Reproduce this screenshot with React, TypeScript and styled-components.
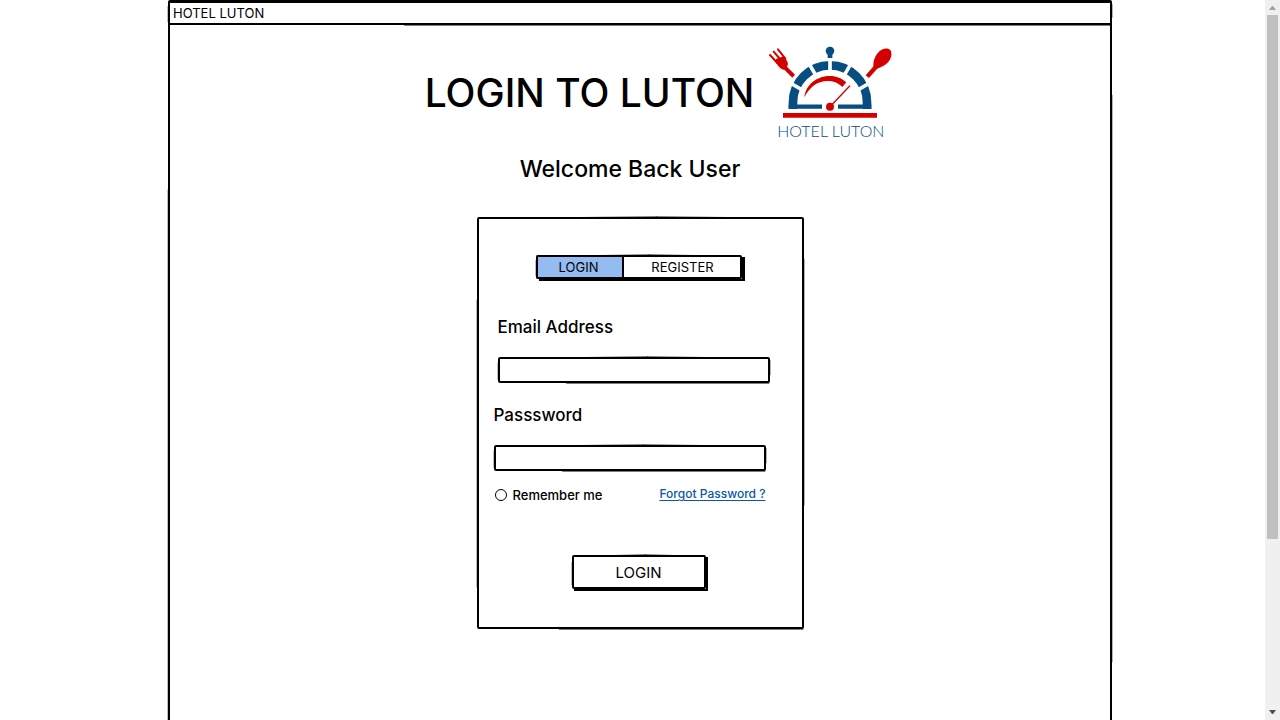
import React, { useState } from "react";
import styled, { createGlobalStyle } from "styled-components";

const GlobalStyle = createGlobalStyle`
  *, *::before, *::after { box-sizing: border-box; }
  body { margin: 0; background: #fff; color: #000; font-family: Inter, "Noto Sans", sans-serif; }
`;

const Viewport = styled.div`
  height: 100vh;
  overflow-y: auto;
  scrollbar-width: none;
`;

const Sheet = styled.main`
  position: relative;
  width: 100%;
  max-width: 944px;
  min-height: 946px;
  margin: 0 auto;
  padding-top: 1px;
`;

const TopBar = styled.div`
  position: relative;
  height: 24px;
  padding: 0 5px;
  font-size: 13px;
  line-height: 24px;
`;

const Outline = styled.svg`
  position: absolute;
  inset: 1px;
  width: calc(100% - 2px);
  height: calc(100% - 2px);
  overflow: visible;
  pointer-events: none;
  fill: none;
  stroke: #000;
  stroke-linejoin: round;
`;

/* Hand-drawn border: an even pen line, thickened a little along part of each side. */
function SketchOutline() {
  return (
    <Outline aria-hidden="true">
      <rect width="100%" height="100%" rx="1" strokeWidth="2" />
      <g strokeWidth="1" strokeLinecap="round">
        <line x1="8%" y1="0" x2="55%" y2="-1" />
        <line x1="55%" y1="-1" x2="98%" y2="0" />
        <line x1="25%" y1="100%" x2="100%" y2="100%" transform="translate(0 1)" />
        <line x1="0" y1="20%" x2="0" y2="90%" transform="translate(-1 0)" strokeOpacity="0.5" />
        <line x1="100%" y1="10%" x2="100%" y2="70%" transform="translate(1 0)" strokeOpacity="0.6" />
      </g>
    </Outline>
  );
}

const Header = styled.header`
  display: flex;
  justify-content: center;
  align-items: flex-start;
  gap: 14px;
  padding: 20px 0 0 38px;
`;

const Title = styled.h1`
  margin: 24px 0 0;
  font-size: 39px;
  font-weight: 500;
  line-height: 48px;
`;

const Brand = styled.div`
  width: 125px;
  color: #064d82;
  font-family: Lato, sans-serif;
  font-size: 16px;
  font-weight: 300;
  line-height: 20px;
  text-align: center;
`;

const Emblem = styled.svg`
  display: block;
  width: 125px;
  height: 76px;
`;

const Welcome = styled.h2`
  margin: 12px 0 0;
  padding-right: 20px;
  font-size: 23px;
  font-weight: 500;
  line-height: 32px;
  text-align: center;
`;

const Card = styled.form`
  position: relative;
  width: 100%;
  max-width: 327px;
  margin: 32px auto 0;
  padding: 38px 20px 40px 17px;
`;

const Tabs = styled.div`
  position: relative;
  display: flex;
  width: 206px;
  height: 24px;
  margin: 0 auto;
  background: #fff;
  box-shadow: 3px 2px 0 #000;
`;

const Tab = styled.button<{ $active: boolean }>`
  flex: ${(p) => (p.$active ? "0 0 88px" : "1")};
  padding: 0;
  border: 0;
  border-right: ${(p) => (p.$active ? "2px solid #000" : "0")};
  background: ${(p) => (p.$active ? "#94bbf2" : "#fff")};
  color: #000;
  font: inherit;
  font-size: 13px;
  line-height: 22px;
`;

const Field = styled.div<{ $inset?: boolean }>`
  padding-left: ${(p) => (p.$inset ? "4px" : "0")};
`;

const Label = styled.label`
  display: block;
  font-size: 17px;
  font-weight: 500;
  line-height: 24px;
`;

const Fields = styled.div`
  display: grid;
  gap: 20px;
  padding-top: 36px;
`;

const InputBox = styled.div`
  position: relative;
  width: 272px;
  max-width: 100%;
  height: 26px;
  margin-top: 18px;
`;

const Input = styled.input`
  width: 100%;
  height: 100%;
  padding: 0 8px;
  border: 0;
  outline: 0;
  background: transparent;
  font: inherit;
  font-size: 13px;
`;

const Options = styled.div`
  display: flex;
  justify-content: space-between;
  align-items: center;
  width: 272px;
  max-width: 100%;
  padding: 14px 0 0 1px;
  font-size: 13px;
  line-height: 20px;
`;

const Remember = styled.label`
  display: flex;
  align-items: center;
  gap: 6px;
  font-weight: 500;
`;

const Radio = styled.input`
  appearance: none;
  width: 12px;
  height: 12px;
  margin: 0;
  border: 1px solid #000;
  border-radius: 50%;
  &:checked { background: radial-gradient(#000 40%, #fff 45%); }
`;

const Forgot = styled.a`
  color: #0b57a4;
  font-size: 12px;
  font-weight: 500;
  line-height: 16px;
  padding-bottom: 2px;
  text-underline-offset: 2px;
`;

const Submit = styled.button`
  position: relative;
  display: block;
  width: 134px;
  height: 34px;
  margin: 50px auto 0;
  padding: 0;
  border: 0;
  background: #fff;
  box-shadow: 2px 2px 0 #000;
  color: #000;
  font: inherit;
  font-size: 15px;
`;

const ScrollTrack = styled.div`
  position: fixed;
  top: 0;
  right: 0;
  bottom: 0;
  display: flex;
  flex-direction: column;
  width: 15px;
  background: #f0f0f0;
`;

const ScrollArrow = styled.svg`
  display: block;
  flex: 0 0 15px;
  width: 15px;
`;

const ScrollLane = styled.div`
  flex: 1;
  padding: 0 2px;
`;

const ScrollThumb = styled.div`
  height: 76%;
  background: #c0c0c0;
`;

function Logo() {
  return (
    <Brand>
      <Emblem viewBox="54 30 375 228" aria-hidden="true">
        <g fill="none" stroke="#064d82">
          <path d="M129 222 V202 A111 111 0 0 1 351 202 V222" strokeWidth="26" />
          <path d="M116 215 H216 M264 215 H364" strokeWidth="13" />
        </g>
        <g stroke="#fff" strokeWidth="11">
          <path d="M240 70 V112" />
          <path d="M177 86 L198 122 M303 86 L282 122" />
          <path d="M121 144 L160 167 M359 144 L320 167" />
        </g>
        <path
          d="M240 35 C248 35 253 41 253 48 C253 54 248 57 247 61 V69 H233 V61 C232 57 227 54 227 48 C227 41 232 35 240 35 Z"
          fill="#064d82"
        />
        <g fill="#d40000">
          <path d="M163 187 C168 145 204 123 240 123 C259 123 276 130 289 142 L277 156 C264 143 249 138 234 138 C200 138 178 158 163 187 Z" />
          <circle cx="240" cy="215" r="12" />
          <path d="M99 234 H381 V248 H99 Z" />
          <path d="M374 103 C365 92 372 66 384 53 C396 40 414 37 421 46 C428 56 424 73 411 85 C400 95 383 101 374 103 Z" />
          <path d="M81 88 C77 82 76 77 78 72 L101 64 L109 75 C115 82 115 89 111 95 L135 119 L127 128 L103 104 C95 105 87 97 81 88 Z" />
        </g>
        <g fill="none" stroke="#d40000">
          <path d="M240 215 L299 153" strokeWidth="4" strokeLinecap="round" />
          <path d="M352 125 L380 93" strokeWidth="13" />
          <path d="M60 60 L82 84 M71 50 L95 78 M84 43 L106 71" strokeWidth="6" strokeLinecap="round" />
        </g>
      </Emblem>
      HOTEL LUTON
    </Brand>
  );
}

function TextField(props: { id: string; label: string; type: string; inset?: boolean }) {
  return (
    <Field $inset={props.inset}>
      <Label htmlFor={props.id}>{props.label}</Label>
      <InputBox>
        <Input id={props.id} type={props.type} />
        <SketchOutline />
      </InputBox>
    </Field>
  );
}

export default function App() {
  const [tab, setTab] = useState("LOGIN");
  return (
    <>
      <GlobalStyle />
      <Viewport>
        <Sheet>
          <SketchOutline />
          <TopBar>
            HOTEL LUTON
            <SketchOutline />
          </TopBar>
          <Header>
            <Title>LOGIN TO LUTON</Title>
            <Logo />
          </Header>
          <Welcome>Welcome Back User</Welcome>
          <Card onSubmit={(e) => e.preventDefault()}>
            <SketchOutline />
            <Tabs>
              {["LOGIN", "REGISTER"].map((name) => (
                <Tab key={name} type="button" $active={tab === name} onClick={() => setTab(name)}>
                  {name}
                </Tab>
              ))}
              <SketchOutline />
            </Tabs>
            <Fields>
              <TextField id="email" label="Email Address" type="email" inset />
              <TextField id="password" label="Passsword" type="password" />
            </Fields>
            <Options>
              <Remember>
                <Radio type="radio" name="remember" />
                Remember me
              </Remember>
              <Forgot href="#forgot">Forgot Password ?</Forgot>
            </Options>
            <Submit type="submit">
              LOGIN
              <SketchOutline />
            </Submit>
          </Card>
        </Sheet>
      </Viewport>
      <ScrollTrack aria-hidden="true">
        <ScrollArrow viewBox="0 0 15 15">
          <path d="M4 10 H11 L8 6 H7 Z" fill="#a3a3a3" />
        </ScrollArrow>
        <ScrollLane>
          <ScrollThumb />
        </ScrollLane>
        <ScrollArrow viewBox="0 0 15 15">
          <path d="M4 5 H11 L8 9 H7 Z" fill="#505050" />
        </ScrollArrow>
      </ScrollTrack>
    </>
  );
}
